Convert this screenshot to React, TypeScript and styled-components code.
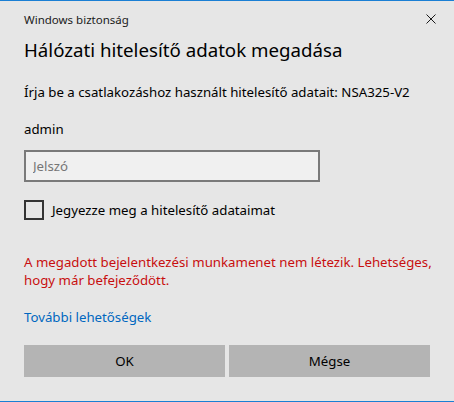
import React, { useState } from 'react';
import styled, { createGlobalStyle } from 'styled-components';

const GlobalStyle = createGlobalStyle`
  html, body {
    margin: 0;
    padding: 0;
    background: #e6e6e6;
  }
  * {
    box-sizing: border-box;
  }
`;

const Window = styled.div`
  width: 454px;
  height: 402px;
  display: flex;
  flex-direction: column;
  background-color: #e6e6e6;
  border-top: 1px solid #1a7fd4;
  border-bottom: 1px solid #1a7fd4;
  font-family: 'Segoe UI', 'Noto Sans', sans-serif;
  color: #000;
`;

const TitleBar = styled.div`
  flex-shrink: 0;
  height: 36px;
  display: flex;
  align-items: center;
  padding: 0 12px 0 24px;
  font-size: 11.5px;
  color: #1a1a1a;
`;

const TitleText = styled.span`
  flex: 1;
`;

const CloseButton = styled.button`
  width: 22px;
  height: 22px;
  display: flex;
  align-items: center;
  justify-content: center;
  background: none;
  border: none;
  padding: 0;
  cursor: pointer;
`;

const Content = styled.div`
  display: flex;
  flex-direction: column;
  align-items: flex-start;
  padding: 0 24px;
`;

const Heading = styled.h1`
  margin: 0;
  font-size: 18.7px;
  line-height: 26px;
  font-weight: 400;
  white-space: nowrap;
`;

const Text = styled.div<{ $top: number }>`
  margin-top: ${(p) => p.$top}px;
  font-size: 13.25px;
  line-height: 20px;
  white-space: nowrap;
`;

const PasswordInput = styled.input`
  margin-top: 11px;
  width: 296px;
  height: 32px;
  padding: 0 7px;
  border: 2px solid #7a7a7a;
  background-color: #f0f0f0;
  font-family: inherit;
  font-size: 13.25px;
  color: #000;
  outline: none;
  &::placeholder {
    color: #767676;
  }
`;

const CheckRow = styled.label`
  margin-top: 18px;
  display: flex;
  align-items: center;
  font-size: 13.25px;
  line-height: 20px;
  cursor: pointer;
`;

const Box = styled.span<{ $checked: boolean }>`
  width: 20px;
  height: 20px;
  border: 2px solid #333;
  margin-right: 8px;
  display: flex;
  align-items: center;
  justify-content: center;
  background: ${(p) => (p.$checked ? '#333' : 'transparent')};
`;

const ErrorText = styled.div`
  margin-top: 33px;
  font-size: 13.25px;
  line-height: 18px;
  color: #c80f0f;
  white-space: nowrap;
`;

const Link = styled.a`
  margin-top: 18px;
  font-size: 13.25px;
  line-height: 20px;
  color: #0067c0;
  text-decoration: none;
  cursor: pointer;
`;

const ButtonRow = styled.div`
  margin-top: 18px;
  display: grid;
  grid-template-columns: 1fr 1fr;
  gap: 4px;
  align-self: stretch;
`;

const Button = styled.button`
  height: 32px;
  border: none;
  background-color: #b4b4b4;
  font-family: inherit;
  font-size: 13.25px;
  color: #000;
  cursor: pointer;
`;

const App: React.FC = () => {
  const [remember, setRemember] = useState(false);

  return (
    <>
      <GlobalStyle />
      <Window>
        <TitleBar>
          <TitleText>Windows biztonság</TitleText>
          <CloseButton aria-label="Bezárás">
            <svg width="10" height="10" viewBox="0 0 10 10">
              <path d="M0.5 0.5 L9.5 9.5 M9.5 0.5 L0.5 9.5" stroke="#1a1a1a" strokeWidth="1" />
            </svg>
          </CloseButton>
        </TitleBar>
        <Content>
          <Heading>Hálózati hitelesítő adatok megadása</Heading>
          <Text $top={19}>Írja be a csatlakozáshoz használt hitelesítő adatait: NSA325-V2</Text>
          <Text $top={17}>admin</Text>
          <PasswordInput type="password" placeholder="Jelszó" />
          <CheckRow onClick={() => setRemember(!remember)}>
            <Box $checked={remember} />
            Jegyezze meg a hitelesítő adataimat
          </CheckRow>
          <ErrorText>
            A megadott bejelentkezési munkamenet nem létezik. Lehetséges,
            <br />
            hogy már befejeződött.
          </ErrorText>
          <Link>További lehetőségek</Link>
          <ButtonRow>
            <Button>OK</Button>
            <Button>Mégse</Button>
          </ButtonRow>
        </Content>
      </Window>
    </>
  );
};

export default App;
